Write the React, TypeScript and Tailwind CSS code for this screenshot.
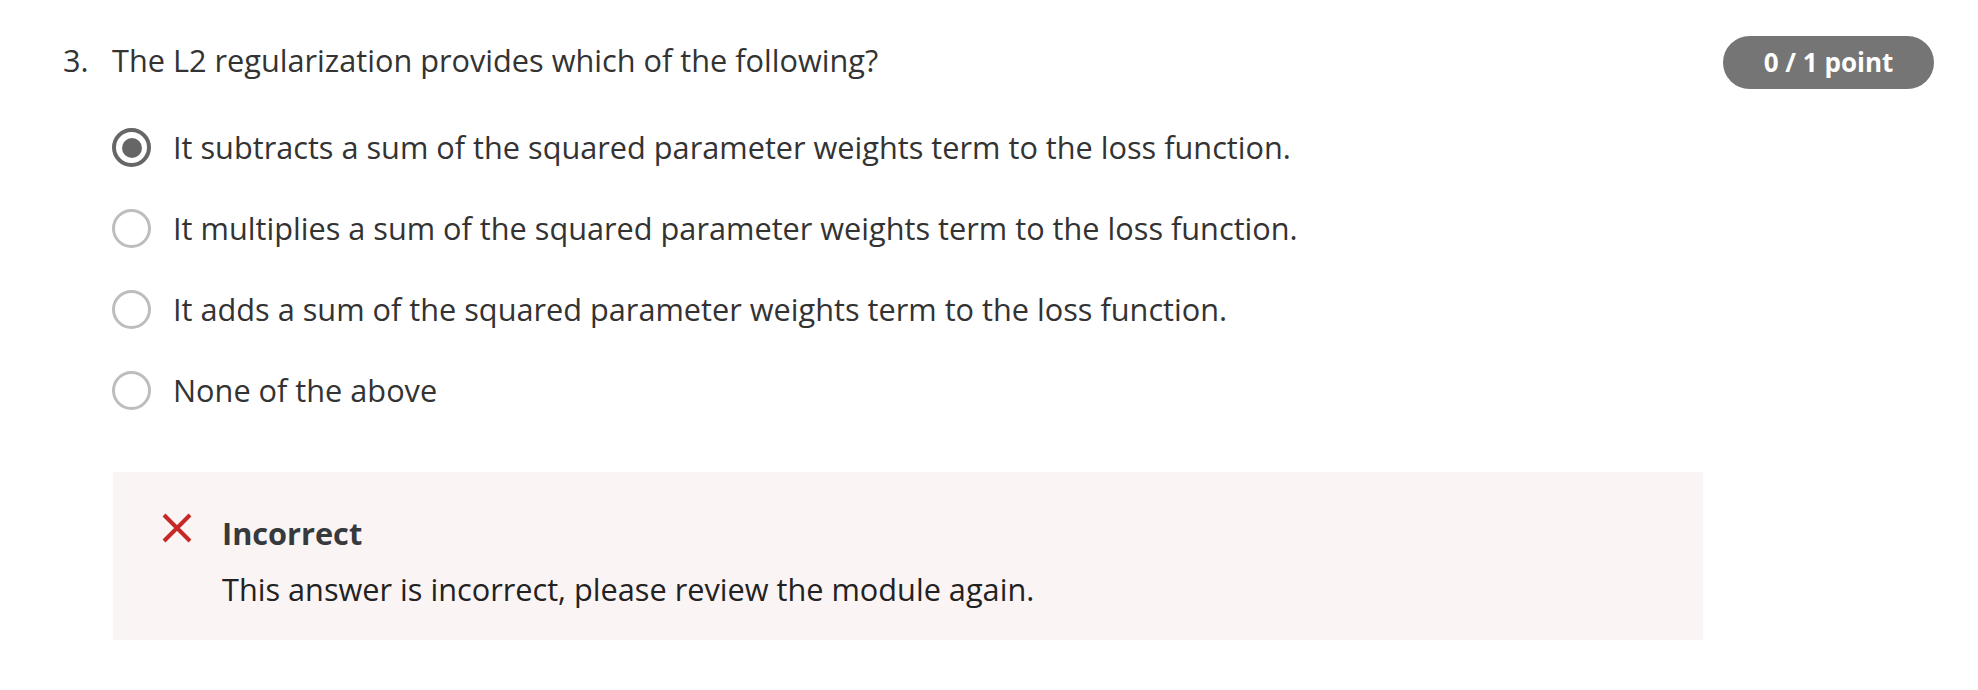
const options = [
  'It subtracts a sum of the squared parameter weights term to the loss function.',
  'It multiplies a sum of the squared parameter weights term to the loss function.',
  'It adds a sum of the squared parameter weights term to the loss function.',
  'None of the above',
];

function Radio({ checked }: { checked: boolean }) {
  if (checked) {
    return (
      <span className="flex h-[39px] w-[39px] shrink-0 items-center justify-center rounded-full border-[4px] border-[#666666]">
        <span className="h-[20px] w-[20px] rounded-full bg-[#666666]" />
      </span>
    );
  }
  return <span className="h-[39px] w-[39px] shrink-0 rounded-full border-[3px] border-[#bdbdbd]" />;
}

function CrossIcon() {
  return (
    <svg width="32" height="32" viewBox="0 0 32 32" className="mt-[1px] shrink-0">
      <path d="M3 3 L29 29 M29 3 L3 29" stroke="#c62828" strokeWidth="4" strokeLinecap="butt" fill="none" />
    </svg>
  );
}

export default function App() {
  const selected = 0;

  return (
    <div className="h-[690px] w-full bg-white pl-[63px] pr-[44px] pt-[36px] text-[#333333] font-['Open_Sans',sans-serif]">
      {/* Question header */}
      <div className="flex items-start">
        <span className="mt-[2px] w-[49px] shrink-0 text-[30.7px] leading-[45px]">3.</span>
        <p className="mt-[2px] flex-1 text-[30.7px] leading-[45px]">
          The L2 regularization provides which of the following?
        </p>
        <div className="flex h-[53px] w-[211px] items-center justify-center rounded-full bg-[#757575] text-[26px] font-bold text-white">
          0 / 1 point
        </div>
      </div>

      {/* Options */}
      <div className="ml-[49px] mt-[18px]">
        {options.map((opt, i) => (
          <div key={opt} className="flex h-[81px] items-center gap-[22px]">
            <Radio checked={i === selected} />
            <span className="text-[30.7px] leading-[45px]">{opt}</span>
          </div>
        ))}
      </div>

      {/* Feedback */}
      <div className="ml-[50px] mt-[41px] w-[1590px] bg-[#faf4f4] pb-[28px] pl-[48px] pr-8 pt-[39px]">
        <div className="flex items-start gap-[29px]">
          <CrossIcon />
          <div>
            <p className="text-[30.7px] font-bold leading-[45px] text-[#373a3c]">Incorrect</p>
            <p className="mt-[11px] text-[30.7px] leading-[45px] text-[#222222]">
              This answer is incorrect, please review the module again.
            </p>
          </div>
        </div>
      </div>
    </div>
  );
}
